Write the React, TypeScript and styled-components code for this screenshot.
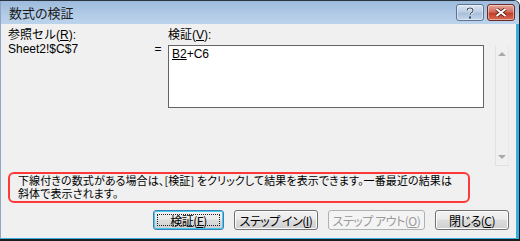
import React from 'react'
import styled, { createGlobalStyle } from 'styled-components'

const GlobalStyle = createGlobalStyle`
  html, body { margin: 0; padding: 0; background: #fff; }
  body { font-family: "Liberation Sans", "Noto Sans CJK JP", sans-serif; }
`

const uiFont = `"Liberation Sans", "Noto Sans CJK JP", sans-serif`

const Window = styled.div`
  width: 520px;
  height: 241px;
  box-sizing: border-box;
  display: flex;
  flex-direction: column;
  border-right: 1px solid #1e1e1e;
  border-bottom: 2px solid #1e1e1e;
  border-top: 1px solid #2a3340;
  border-top-right-radius: 6px;
  overflow: hidden;
  background: #f0f0f0;
`

const TitleBar = styled.div`
  height: 23px;
  flex: none;
  display: flex;
  align-items: center;
  padding: 0 4px 0 8px;
  background: linear-gradient(#9dbbdd, #b2cbe6 60%, #bcd3ec);
  border-left: 1px solid #8ea6c2;
`

const Title = styled.div`
  flex: 1;
  font-family: ${uiFont};
  font-size: 13px;
  color: #1a1a1a;
  font-feature-settings: "palt";
  padding-bottom: 1px;
`

const CaptionButton = styled.div<{ $close?: boolean }>`
  width: 26px;
  height: 15px;
  border: 1px solid ${p => (p.$close ? '#6b2a22' : '#5b7390')};
  border-radius: 3px;
  margin-left: 3px;
  display: flex;
  align-items: center;
  justify-content: center;
  background: ${p =>
    p.$close
      ? 'linear-gradient(#e5a79b, #d46d5c 45%, #c2402c 55%, #d86a55)'
      : 'linear-gradient(#d9e5f2, #bccfe5 45%, #a8bfdb 55%, #c4d6ea)'};
  box-shadow: inset 0 0 0 1px rgba(255, 255, 255, 0.45);
`

const Client = styled.div`
  flex: 1;
  display: flex;
  flex-direction: column;
  padding: 4px 4px 0 7px;
  border-left: 1px solid #8ea6c2;
  border-right: 3px solid #3aaee0;
  border-bottom: 1px solid #3aaee0;
  font-family: ${uiFont};
  font-size: 12px;
  color: #000;
`

const TopRow = styled.div`
  display: flex;
  align-items: flex-start;
  height: 139px;
`

const Column = styled.div<{ $w: number }>`
  width: ${p => p.$w}px;
  flex: none;
  display: flex;
  flex-direction: column;
`

const Label = styled.div`
  line-height: 14px;
  height: 14px;
  white-space: nowrap;
`

const Equals = styled.div`
  width: 20px;
  flex: none;
  line-height: 14px;
  margin-top: 14px;
  text-align: center;
`

const FormulaBox = styled.div`
  margin-top: 3px;
  height: 57px;
  border: 1px solid #646464;
  background: #fff;
  padding: 2px 3px;
  line-height: 12px;
`

const Scroll = styled.div`
  width: 14px;
  height: 121px;
  margin: 17px 0 0 11px;
  flex: none;
  border-left: 1px solid #e2e2e2;
  border-right: 1px solid #e8e8e8;
  border-bottom: 1px solid #e0e0e0;
  display: flex;
  flex-direction: column;
  justify-content: space-between;
  align-items: center;
  padding: 7px 0 6px;
  box-sizing: border-box;
`

const Arrow = styled.div<{ $down?: boolean }>`
  width: 0;
  height: 0;
  border-left: 4px solid transparent;
  border-right: 4px solid transparent;
  ${p =>
    p.$down
      ? 'border-top: 4px solid #a8a8a8;'
      : 'border-bottom: 4px solid #a8a8a8;'}
`

const Note = styled.div`
  margin-top: 5px;
  width: 462px;
  height: 31px;
  box-sizing: border-box;
  border: 2px solid #ff3838;
  border-radius: 6px;
  padding: 0 0 0 8px;
  font-family: "Noto Sans CJK JP", sans-serif;
  font-size: 11px;
  line-height: 13px;
  letter-spacing: 0.1px;
  font-feature-settings: "palt";
  white-space: nowrap;
`

const ButtonRow = styled.div`
  display: flex;
  justify-content: flex-end;
  gap: 10px;
  margin-top: 7px;
  padding-right: 3px;
`

const Button = styled.div<{ $w: number; $focus?: boolean; $disabled?: boolean }>`
  width: ${p => p.$w}px;
  height: 20px;
  box-sizing: border-box;
  border: 1px solid ${p => (p.$focus ? '#3c7fb1' : p.$disabled ? '#adb2b5' : '#707070')};
  border-radius: 3px;
  background: ${p =>
    p.$disabled
      ? '#f4f4f4'
      : 'linear-gradient(#f2f2f2, #ebebeb 45%, #dddddd 50%, #cfcfcf)'};
  box-shadow: ${p =>
    p.$focus ? 'inset 0 0 0 1px #48c8f4' : p.$disabled ? 'none' : 'inset 0 0 0 1px #fcfcfc'};
  color: ${p => (p.$disabled ? '#9a9a9a' : '#000')};
  display: flex;
  align-items: center;
  justify-content: center;
  font-family: "Noto Sans CJK JP", sans-serif;
  font-size: 12px;
  letter-spacing: -0.5px;
  font-feature-settings: "palt";
  position: relative;
`

const FocusRect = styled.div`
  position: absolute;
  inset: 3px;
  border: 1px dotted #222;
`

const U = styled.span`
  text-decoration: underline;
`

export default function App() {
  return (
    <>
      <GlobalStyle />
      <Window>
        <TitleBar>
          <Title>数式の検証</Title>
          <CaptionButton>
            <svg width="10" height="12" viewBox="0 0 10 12">
              <path
                d="M2 3.5 Q2 1 5 1 Q8 1 8 3.5 Q8 5 6 6 Q5 6.6 5 8"
                fill="none"
                stroke="#fff"
                strokeWidth="2.4"
              />
              <path
                d="M2 3.5 Q2 1 5 1 Q8 1 8 3.5 Q8 5 6 6 Q5 6.6 5 8"
                fill="none"
                stroke="#3b4a5e"
                strokeWidth="1.1"
              />
              <rect x="4" y="9.5" width="2" height="2" fill="#3b4a5e" />
            </svg>
          </CaptionButton>
          <CaptionButton $close>
            <svg width="12" height="9" viewBox="0 0 12 9">
              <path d="M1.5 1 L10.5 8 M10.5 1 L1.5 8" stroke="#5a2018" strokeWidth="3.6" />
              <path d="M1.5 1 L10.5 8 M10.5 1 L1.5 8" stroke="#fff" strokeWidth="2" />
            </svg>
          </CaptionButton>
        </TitleBar>
        <Client>
          <TopRow>
            <Column $w={140}>
              <Label>
                参照セル(<U>R</U>):
              </Label>
              <Label>Sheet2!$C$7</Label>
            </Column>
            <Equals>=</Equals>
            <Column $w={316}>
              <Label>
                検証(<U>V</U>):
              </Label>
              <FormulaBox>
                <U>B2</U>+C6
              </FormulaBox>
            </Column>
            <Scroll>
              <Arrow />
              <Arrow $down />
            </Scroll>
          </TopRow>
          <Note>
            下線付きの数式がある場合は、[検証] をクリックして結果を表示できます。一番最近の結果は
            <br />
            斜体で表示されます。
          </Note>
          <ButtonRow>
            <Button $w={71} $focus>
              <FocusRect />
              検証(<U>E</U>)
            </Button>
            <Button $w={84}>
              ステップ イン(<U>I</U>)
            </Button>
            <Button $w={97} $disabled>
              ステップ アウト(<U>O</U>)
            </Button>
            <Button $w={74}>
              閉じる(<U>C</U>)
            </Button>
          </ButtonRow>
        </Client>
      </Window>
    </>
  )
}
